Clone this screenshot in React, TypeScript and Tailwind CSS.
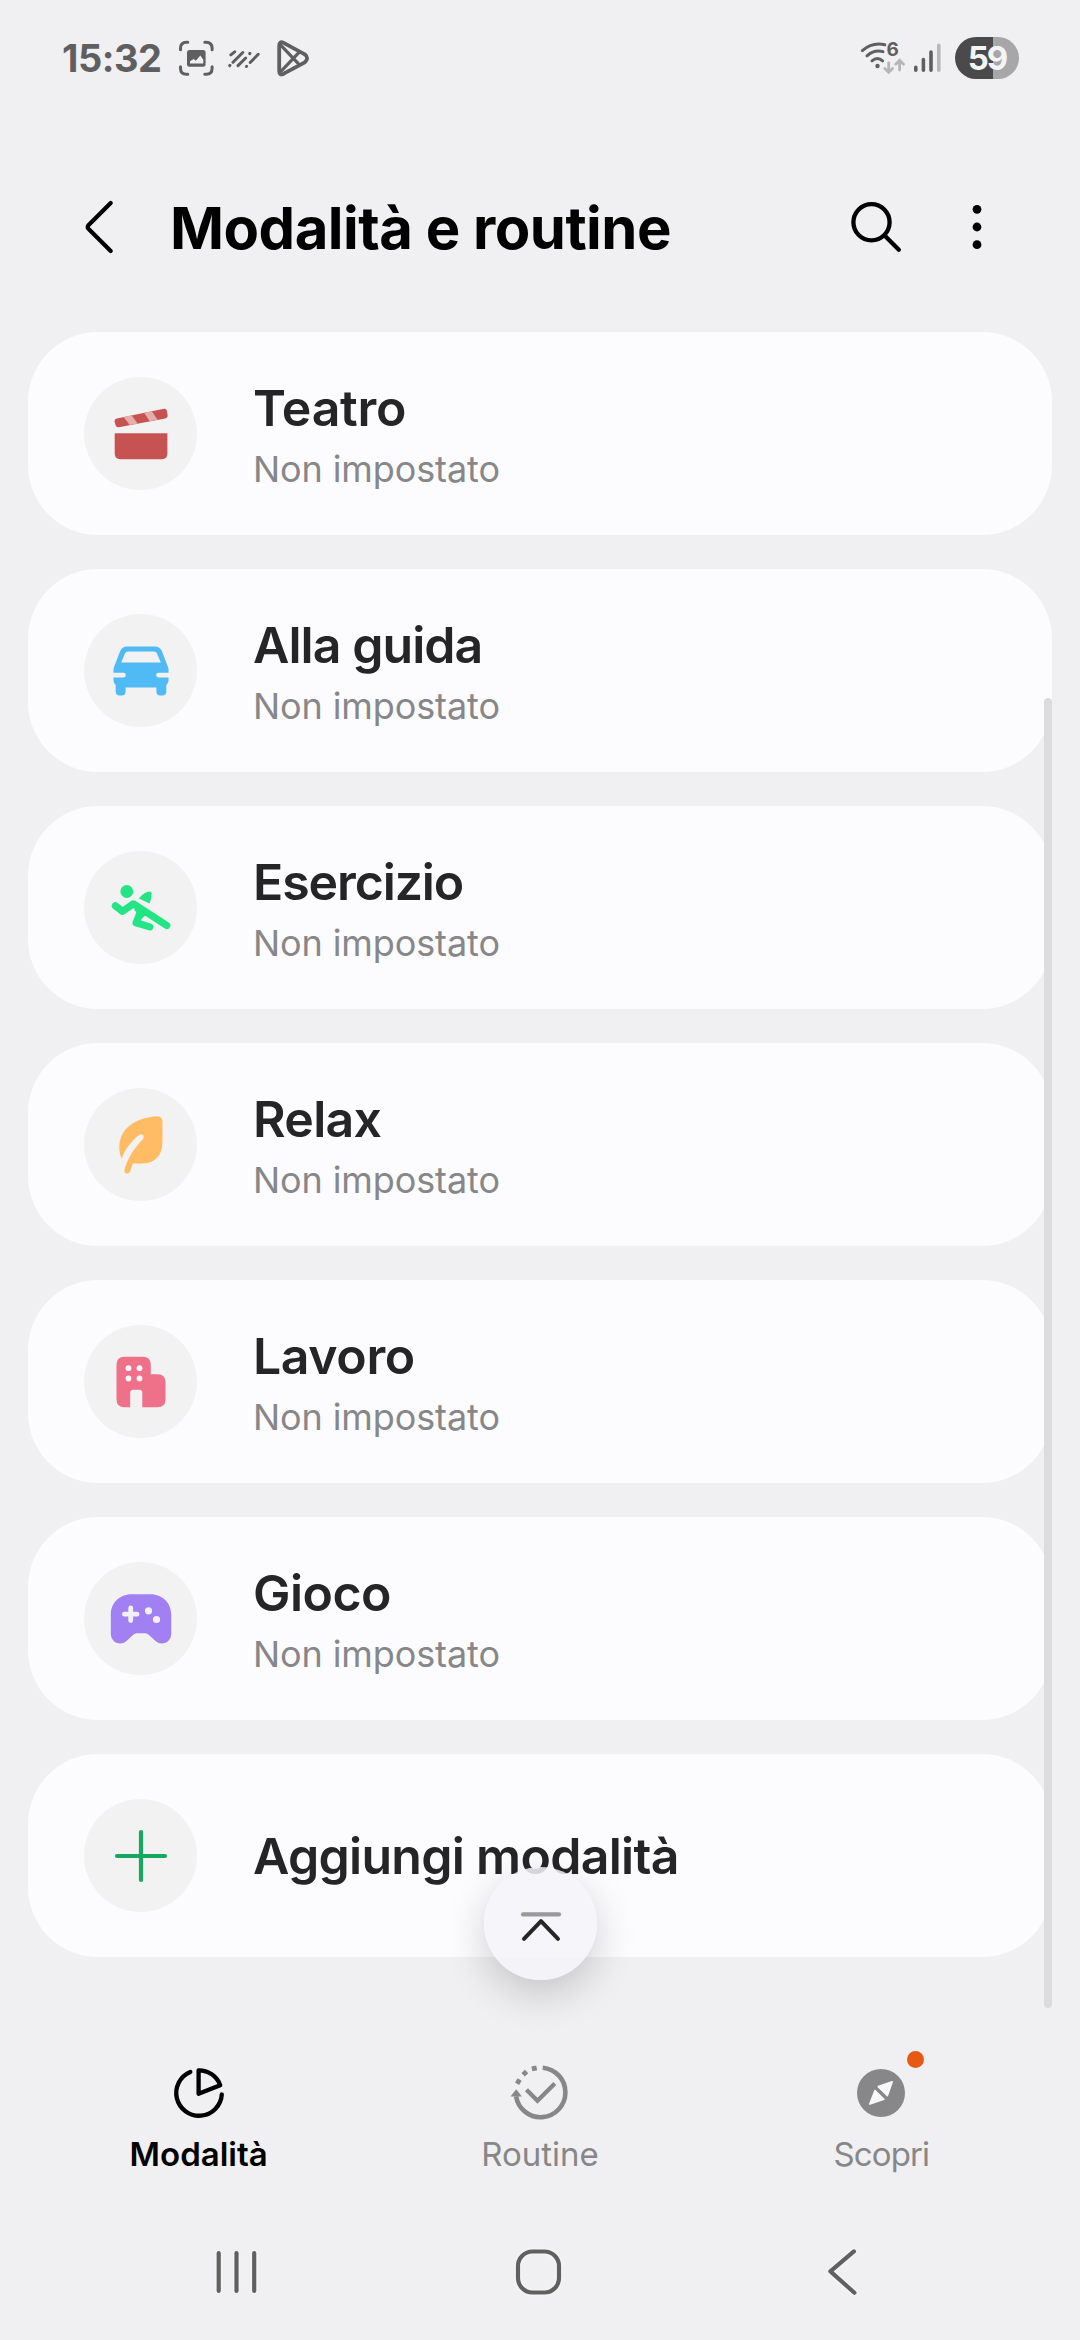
import type { ReactNode } from "react";

const modes: { title: string; tracking: string; subtitle?: string; icon: ReactNode }[] = [
  {
    title: "Teatro",
    tracking: "tracking-[-0.26px]",
    subtitle: "Non impostato",
    icon: (
      <g>
        <path d="M-26.3 -0.8H26.4V19.5Q26.4 25.2 20.7 25.2H-20.6Q-26.3 25.2 -26.3 19.5Z" fill="#c65351" />
        <path d="M-26.5 -12.5Q-26.7 -15 -24.2 -15.6L23 -25.2Q25.4 -25.6 25.9 -23.2L26.6 -19Q27 -16.2 24.2 -15.6L-22.2 -6.8Q-24.8 -6.4 -25.4 -8.8Z" fill="#c65351" />
        <path d="M-17.4 -17L-9.5 -18.7L-3.3 -10.4L-11.3 -8.9Z" fill="#e4aead" />
        <path d="M3 -21.2L10.8 -22.8L16.6 -14.2L8.8 -12.7Z" fill="#e4aead" />
      </g>
    ),
  },
  {
    title: "Alla guida",
    tracking: "tracking-[-0.94px]",
    subtitle: "Non impostato",
    icon: (
      <g fill="#4fbaf3">
        <path
          fillRule="evenodd"
          d="M-14 -24.5H14Q18.8 -24.5 20.8 -20L27 -4Q27.5 -2.8 27.5 -1.5V1.8H17.5Q15.2 1.8 15.2 4.1Q15.2 6.5 17.5 6.5H27.5V9.5Q27.5 12 25.3 14V20.5Q25.3 24.5 21.3 24.5H19.4Q15.4 24.5 15.4 20.5V16.5H-15.4V20.5Q-15.4 24.5 -19.4 24.5H-21.3Q-25.3 24.5 -25.3 20.5V14Q-27.5 12 -27.5 9.5V6.5H-17.5Q-15.2 6.5 -15.2 4.1Q-15.2 1.8 -17.5 1.8H-27.5V-1.5Q-27.5 -2.8 -27 -4L-20.8 -20Q-18.8 -24.5 -14 -24.5ZM-13 -19.5Q-15.2 -19.5 -16 -17.5L-19.8 -8.5H19.8L16 -17.5Q15.2 -19.5 13 -19.5Z"
        />
      </g>
    ),
  },
  {
    title: "Esercizio",
    tracking: "tracking-[-1.1px]",
    subtitle: "Non impostato",
    icon: (
      <g fill="#24e585">
        <circle cx="-14.2" cy="-16.5" r="6.4" />
        <path d="M-2.2 -9.5Q1 -13.5 3.5 -14.8Q6 -16.4 8.8 -16.6Q10.6 -16.6 10.6 -14.8Q10.6 -9 8.5 -4.6Z" />
        <g fill="none" stroke="#24e585" strokeWidth="7.2" strokeLinecap="round" strokeLinejoin="round">
          <path d="M-25.6 -2.2L-18.5 3.4L-7.6 -4.2L25.8 17.4" />
          <path d="M-0.5 3.5L-4.9 14.8L8.8 18.9" />
        </g>
        <path d="M-6 -3L6 6L-0.5 12L-5 8Q-3.5 4 -6.5 2.5Z" />
      </g>
    ),
  },
  {
    title: "Relax",
    tracking: "tracking-[-0.7px]",
    subtitle: "Non impostato",
    icon: (
      <path
        d="M-19.4 13.7C-24.2 2.5 -21.5 -11 -12.5 -18.6C-5 -25.2 6 -28.2 15.8 -28.8Q21.5 -28.8 21.5 -23.2V-2.5C21.5 10.5 13.5 18.6 1 18.6Q-4 18.8 -8 18.2L-11.2 27Q-12.3 29.2 -15 28.4Q-17.2 27.4 -16.6 24.8C-13.6 14 -7.2 3.5 2.2 -6.2Q3.6 -8 2.2 -9.8Q0.2 -11.4 -1.9 -10C-9.5 -4 -15.5 3.5 -19.4 13.7Z"
        fill="#ffbc64"
      />
    ),
  },
  {
    title: "Lavoro",
    tracking: "tracking-[-0.4px]",
    subtitle: "Non impostato",
    icon: (
      <g>
        <path
          d="M-16.5 -25.2H1.8Q9.8 -25.2 9.8 -17.2V-7.8H16.5Q24.5 -7.8 24.5 0.2V17.2Q24.5 25.2 16.5 25.2H1.3V10.8Q1.3 7.8 -1.7 7.8H-7.8Q-10.8 7.8 -10.8 10.8V25.2H-16.5Q-24.5 25.2 -24.5 17.2V-17.2Q-24.5 -25.2 -16.5 -25.2Z"
          fill="#ee7189"
        />
        <g fill="#f8f4f6">
          <circle cx="-12.5" cy="-13.8" r="2.9" />
          <circle cx="-1.5" cy="-13.8" r="2.9" />
          <circle cx="-12.5" cy="-3.5" r="2.9" />
          <circle cx="-1.5" cy="-3.5" r="2.9" />
        </g>
      </g>
    ),
  },
  {
    title: "Gioco",
    tracking: "tracking-[-0.5px]",
    subtitle: "Non impostato",
    icon: (
      <g>
        <path
          d="M-9.5 -24.8H9.5C21.5 -24.8 30.2 -16 30.2 -4.5V14.5C30.2 20.5 26 24.5 20.8 24.5Q17.2 24.5 14.5 22L8.5 16.4Q6.5 14.3 4 14.3H-4Q-6.5 14.3 -8.5 16.4L-14.5 22Q-17.2 24.5 -20.8 24.5C-26 24.5 -30.2 20.5 -30.2 14.5V-4.5C-30.2 -16 -21.5 -24.8 -9.5 -24.8Z"
          fill="#a180f3"
        />
        <path d="M-16.6 -4.8H-4M-10.3 -11.1V1.5" stroke="#f4f0f8" strokeWidth="4.8" strokeLinecap="round" />
        <circle cx="7.5" cy="-8.2" r="3.6" fill="#f4f0f8" />
        <circle cx="15.5" cy="0.5" r="3.6" fill="#f4f0f8" />
      </g>
    ),
  },
  {
    title: "Aggiungi modalità",
    tracking: "tracking-[-0.7px]",
    icon: <path d="M-24 0H24M0 -24V24" stroke="#18a663" strokeWidth="4.2" strokeLinecap="round" />,
  },
];

const StatusBar = () => (
  <div className="flex h-[116px] shrink-0 items-center justify-between pl-[62px] pr-[61px]">
    <div className="flex items-center gap-2 text-[#5f5f61]">
      <span className="w-[106px] text-[38px] font-bold leading-none tracking-[-0.45px]">15:32</span>
      <svg width="40" height="40" viewBox="-20.3 -20.3 40 40" fill="none" stroke="currentColor" strokeWidth="3" strokeLinecap="round">
        <path d="M-15.8 -8.5V-10Q-15.8 -16 -9.8 -16H-8.5M8.5 -16H9.8Q15.8 -16 15.8 -10V-8.5M15.8 8.5V10Q15.8 16 9.8 16H8.5M-8.5 16H-9.8Q-15.8 16 -15.8 10V8.5" />
        <rect x="-9.3" y="-8.3" width="18.6" height="16.8" rx="2.5" fill="currentColor" stroke="none" />
        <path d="M-6.3 5.2V3L-2.6 0.6L-0.5 2.4L4 -2.8L7 1.4V5.2Z" fill="#f0f0f2" stroke="none" />
      </svg>
      <svg width="40" height="40" viewBox="-20 -21.3 40 40" fill="none" stroke="currentColor" strokeWidth="3" strokeLinecap="round">
        <path d="M-13.2 -4.4L-9.3 -7.5M-14.3 6.3L-14.1 6.1M-11 3L-1.2 -6.8M-6 6.3L1.7 -1.3M5.7 -5.7L5.9 -5.9M2.4 7.2L2.6 7M6.2 3.2L14.2 -5" />
      </svg>
      <svg width="40" height="40" viewBox="-21 -20.3 40 40" fill="none" stroke="currentColor" strokeLinejoin="round">
        <path d="M-13.8 -12.5Q-13.8 -17.6 -9.3 -15.4L11.8 -4Q16.4 0 11.8 4L-9.3 15.4Q-13.8 17.6 -13.8 12.5Z" strokeWidth="3.8" />
        <path d="M-12.5 -13.5L6.5 6.5M-12.5 13.5L6.5 -6.5" strokeWidth="3.2" />
      </svg>
    </div>

    <div className="flex items-center">
      <svg width="48" height="40" viewBox="0 0 48 40" fill="none" strokeLinecap="round">
        <g stroke="#5f5f61" strokeWidth="3">
          <path d="M4.3 12.6Q14.5 3.9 26.8 6.8" />
          <path d="M9 17.8Q16.2 11.5 25 13.6" />
          <path d="M14 22.8Q19.3 18.2 24.6 22.8" />
        </g>
        <circle cx="19.5" cy="28" r="2.2" fill="#5f5f61" />
        <text x="28.6" y="18.4" fontSize="19" fontWeight="700" fill="#5f5f61">6</text>
        <path d="M30.7 24.8V34M26.8 30.4L30.7 34.3L34.6 30.4M41.6 32V22.6M37.7 26.2L41.6 22.3L45.5 26.2" stroke="#b6b6b8" strokeWidth="2.8" />
      </svg>
      <svg className="ml-[7px]" width="30" height="40" viewBox="0 0 30 40" stroke="#5f5f61" strokeWidth="3.6" strokeLinecap="round">
        <path d="M2.8 29.2V32.2M10.4 21.5V32.2M18 14V32.2" />
        <path d="M25.8 7.2V32.2" stroke="#b9b9bb" />
      </svg>
      <div className="ml-3 flex h-[42px] w-16 items-center justify-center rounded-full bg-linear-to-r from-[#4a4a4a] from-[59%] to-[#a7a7a9] to-[59%]">
        <span className="text-[33px] font-bold leading-none tracking-[-2px] text-[#f4f4f6]">59</span>
      </div>
    </div>
  </div>
);

const Header = () => (
  <header className="flex h-[216px] shrink-0 items-center pl-[79px] pr-[93px] pt-1.5 text-black">
    <svg width="40" height="60" viewBox="-20 -30 40 60" fill="none" stroke="currentColor" strokeWidth="4.2" strokeLinecap="round" strokeLinejoin="round">
      <path d="M11.7 -24L-10.6 -1.8Q-12 0 -10.6 1.8L11.7 24" />
    </svg>
    <h1 className="ml-[51px] pt-0.5 text-[58px] font-bold leading-[70px] tracking-[-0.5px]">Modalità e routine</h1>
    <svg className="ml-auto" width="60" height="60" viewBox="-30 -30 60 60" fill="none" stroke="currentColor" strokeWidth="4.3" strokeLinecap="round">
      <circle cx="-3.5" cy="-4.7" r="18.1" />
      <path d="M9.6 8.4L23.8 22.7" />
    </svg>
    <svg className="ml-[62px]" width="20" height="60" viewBox="-10 -30 20 60" fill="currentColor">
      <circle cy="-17.7" r="4.4" />
      <circle cy="0" r="4.4" />
      <circle cy="17.7" r="4.4" />
    </svg>
  </header>
);

const TabBar = () => (
  <nav className="mt-[55px] flex px-7 text-[33px] leading-[44px] text-[#878789]">
    <div className="flex flex-1 flex-col items-center gap-[9px] font-semibold text-black">
      <svg width="60" height="60" viewBox="-30 -30 60 60" fill="none" stroke="currentColor" strokeWidth="4.3" strokeLinecap="round" strokeLinejoin="round">
        <path d="M-8.7 -21.1A22.8 22.8 0 1 0 22.8 1.5" />
        <path d="M-0.4 0.7V-22.7A22.8 22.8 0 0 1 21.2 -7.8Z" />
      </svg>
      <span>Modalità</span>
    </div>
    <div className="flex flex-1 flex-col items-center gap-[9px]">
      <svg width="60" height="60" viewBox="-30.5 -29.3 60 60" fill="none" stroke="currentColor" strokeWidth="4.6">
        <path d="M2.2 -24.6A24.8 24.8 0 1 1 -24.4 4" />
        <path d="M-8.6 -23.4L-3.8 -24.5M-17.4 -17.6L-13.9 -20.9M-23.4 -8.5L-20.9 -12.7" strokeWidth="4.8" />
        <path d="M-24.3 -3L-18.6 4.2H-30Z" fill="currentColor" stroke="none" />
        <path d="M-14 -2.6L-3 8.4L14.3 -8.9" strokeWidth="4.3" />
      </svg>
      <span>Routine</span>
    </div>
    <div className="relative flex flex-1 flex-col items-center gap-[9px]">
      <svg width="60" height="60" viewBox="-30 -30 60 60">
        <circle r="24" fill="currentColor" />
        <g fill="#f8f8fa" stroke="#f8f8fa" strokeWidth="1.6" strokeLinejoin="round">
          <path d="M11.2 -11.2L-2.8 -6.4L6.4 2.6Z" />
          <path d="M-11.2 11.1L-6 -2.5L2.9 6.3Z" />
        </g>
      </svg>
      <span className="tracking-[-0.9px]">Scopri</span>
      <span className="absolute left-[196px] -top-[12px] size-[17px] rounded-full bg-[#e75a16]" />
    </div>
  </nav>
);

const SystemNav = () => (
  <div className="mt-[66px] flex px-[85px] text-[#606060] drop-shadow-[0_0_1.5px_#ffffff]">
    <div className="flex flex-1 justify-center">
      <svg width="60" height="60" viewBox="-29.5 -30 60 60" stroke="currentColor" strokeWidth="4.2" strokeLinecap="round">
        <path d="M-17.8 -19V19M0 -19V19M17.7 -19V19" />
      </svg>
    </div>
    <div className="flex flex-1 justify-center">
      <svg width="60" height="60" viewBox="-28.5 -30 60 60" fill="none" stroke="currentColor" strokeWidth="4.2">
        <rect x="-20.5" y="-20.5" width="41" height="41" rx="14.5" />
      </svg>
    </div>
    <div className="flex flex-1 justify-center">
      <svg width="60" height="60" viewBox="-30 -30 60 60" fill="none" stroke="currentColor" strokeWidth="4.2" strokeLinecap="round" strokeLinejoin="round">
        <path d="M10.9 -20.6L-12.6 -0.6L11.4 20.7" />
      </svg>
    </div>
  </div>
);

export default function App() {
  return (
    <div className="flex h-[2340px] w-[1080px] flex-col overflow-hidden bg-[#f0f0f2] font-['Inter','Liberation_Sans',sans-serif]">
      <StatusBar />
      <Header />

      <main className="relative flex h-[1676px] shrink-0 flex-col gap-[34px] px-7">
        {modes.map((mode) => (
          <div key={mode.title} className="flex h-[203px] shrink-0 items-center rounded-[70px] bg-[#fcfcfe] pl-14">
            <div className="flex size-[113px] items-center justify-center rounded-full bg-[#f2f2f2]">
              <svg width="64" height="64" viewBox="-32 -32 64 64">{mode.icon}</svg>
            </div>
            <div className="ml-14">
              <p className={`text-[50px] font-semibold leading-[60px] text-[#252528] ${mode.tracking}`}>{mode.title}</p>
              {mode.subtitle && (
                <p className="-mb-0.5 mt-[9px] text-[36px] leading-[44px] tracking-[-0.1px] text-[#878789]">{mode.subtitle}</p>
              )}
            </div>
          </div>
        ))}

        {/* Scrollbar thumb */}
        <div className="absolute bottom-0 right-7 h-[1310px] w-2 rounded-full bg-[#dcdcde]" />

        {/* Back to top */}
        <button className="absolute left-[484px] top-[1535px] flex size-[113px] items-center justify-center rounded-full bg-[#f5f5f9]/85 shadow-[0_14px_40px_rgba(0,0,0,0.18)]">
          <svg width="60" height="60" viewBox="-30 -30 60 60" fill="none" strokeLinecap="round" strokeLinejoin="round">
            <path d="M-18 -9.6H18" stroke="#999999" strokeWidth="4.2" />
            <path d="M-17 14.8L0 -2.8L17 14.8" stroke="#262626" strokeWidth="4" />
          </svg>
        </button>
      </main>

      <TabBar />
      <SystemNav />
    </div>
  );
}
